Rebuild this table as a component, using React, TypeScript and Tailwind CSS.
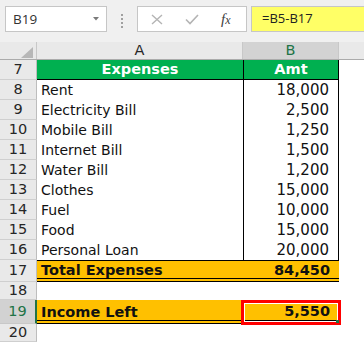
import React from 'react';

const font = "font-['DejaVu_Sans',sans-serif]";

type Item = { name: string; amt: string };

const items: Item[] = [
    { name: 'Rent', amt: '18,000' },
    { name: 'Electricity Bill', amt: '2,500' },
    { name: 'Mobile Bill', amt: '1,250' },
    { name: 'Internet Bill', amt: '1,500' },
    { name: 'Water Bill', amt: '1,200' },
    { name: 'Clothes', amt: '15,000' },
    { name: 'Fuel', amt: '10,000' },
    { name: 'Food', amt: '15,000' },
    { name: 'Personal Loan', amt: '20,000' },
];

// row header cell on the left
const RowNum = ({ n, h, active }: { n: number; h: string; active?: boolean }) => (
    <div
        className={
            active
                ? `${h} w-[37px] shrink-0 flex items-center justify-center bg-[#d2d2d2] border-b border-[#c8c8c8] border-r-2 border-r-[#217346] text-[#217346] text-[14.5px]`
                : `${h} w-[37px] shrink-0 flex items-center justify-center bg-[#e9e9e9] border-b border-[#cfcfcf] border-r border-r-[#bdbdbd] text-[#262626] text-[14.5px]`
        }
    >
        {n}
    </div>
);

const Toolbar = () => (
    <div className="h-[42px] bg-[#f0f0f0] flex items-start pt-[6px] pl-[5px] font-['Open_Sans',sans-serif]">
        <div className="w-[102px] h-[26px] bg-white border border-[#c6c6c6] flex items-center justify-between pl-[7px] pr-[7px]">
            <span className="text-[13.5px] text-[#333]">B19</span>
            <svg width="6" height="4" viewBox="0 0 6 4">
                <path d="M0 0 L6 0 L3 3.5 Z" fill="#7a7a7a" />
            </svg>
        </div>
        <div className="ml-[14px] mt-[8px] flex flex-col gap-[2px]">
            <div className="w-[2px] h-[2px] bg-[#a0a0a0]" />
            <div className="w-[2px] h-[2px] bg-[#a0a0a0]" />
            <div className="w-[2px] h-[2px] bg-[#a0a0a0]" />
            <div className="w-[2px] h-[2px] bg-[#a0a0a0]" />
        </div>
        <div className="ml-[14px] w-[110px] h-[26px] bg-white border border-[#c6c6c6] flex items-center pl-[13px]">
            <svg width="12" height="11" viewBox="0 0 12 11">
                <path d="M1 1 L11 10 M11 1 L1 10" stroke="#b4b4b4" strokeWidth="1.4" />
            </svg>
            <svg className="ml-[22px]" width="14" height="11" viewBox="0 0 14 11">
                <path d="M1 5.5 L5 9.5 L13 1" stroke="#b4b4b4" strokeWidth="1.6" fill="none" />
            </svg>
            <span className="ml-[22px] italic text-[15px] text-[#404040] font-['Liberation_Serif',serif] leading-none">
                f<span className="text-[12px]">x</span>
            </span>
        </div>
        <div className="ml-[4px] flex-1 h-[26px] bg-[#ffff66] border border-[#c6c6c6] border-r-0 flex items-center pl-[10px]">
            <span className="text-[13px] text-[#222]">=B5-B17</span>
        </div>
    </div>
);

const ColHeaders = () => (
    <div className={`flex h-[18px] bg-[#e9e9e9] border-b border-[#ababab] text-[14.5px] ${font}`}>
        <div className="w-[37px] shrink-0 border-r border-[#c8c8c8] flex items-end justify-end pr-[3px] pb-[1px]">
            <svg width="12" height="11" viewBox="0 0 12 11">
                <path d="M0 11 L12 11 L12 0 Z" fill="#b7b7b7" />
            </svg>
        </div>
        <div className="w-[206px] shrink-0 border-r border-[#c8c8c8] flex items-center justify-center text-[#262626]">A</div>
        <div className="w-[96px] shrink-0 bg-[#d3d3d3] border-r border-[#c8c8c8] flex items-center justify-center text-[#217346]">B</div>
        <div className="flex-1" />
    </div>
);

export default function App() {
    return (
        <div className={`w-[364px] h-[342px] overflow-hidden bg-white`}>
            <Toolbar />
            <ColHeaders />
            <div className={`${font} text-[14px] text-[#111]`}>
                {/* row 7 - green header */}
                <div className="flex">
                    <RowNum n={7} h="h-[20px]" />
                    <div className="w-[206px] h-[20px] bg-[#00b050] border-b border-black flex items-center justify-center text-white font-bold text-[14.5px]">
                        Expenses
                    </div>
                    <div className="w-[96px] h-[20px] bg-[#00b050] border-b border-l border-r border-black flex items-center justify-center text-white font-bold text-[14.5px]">
                        Amt
                    </div>
                </div>
                {items.map((it, i) => (
                    <div key={it.name} className="flex">
                        <RowNum n={i + 8} h="h-[20px]" />
                        <div className="w-[206px] h-[20px] flex items-center pl-[4px]">{it.name}</div>
                        <div className="w-[96px] h-[20px] border-l border-r border-black flex items-center justify-end pr-[9px] text-[15px]">
                            {it.amt}
                        </div>
                    </div>
                ))}
                {/* row 17 - total */}
                <div className="flex">
                    <RowNum n={17} h="h-[22px]" />
                    <div className="w-[302px] h-[22px] bg-[#ffc000] border-t border-b-4 border-double border-black flex items-end justify-between pl-[4px] pr-[9px] pb-[1px] font-bold text-[14.5px] leading-[14px]">
                        <span>Total Expenses</span>
                        <span>84,450</span>
                    </div>
                </div>
                <div className="flex">
                    <RowNum n={18} h="h-[18px]" />
                </div>
                {/* row 19 - income left */}
                <div className="flex">
                    <RowNum n={19} h="h-[24px]" active />
                    <div className="w-[206px] h-[24px] bg-[#ffc000] border-b-4 border-double border-black flex items-end pb-[1px] pl-[4px] font-bold text-[14.5px] leading-[14px]">
                        Income Left
                    </div>
                    <div className="relative w-[96px] h-[24px] bg-[#ffc000] border-b-4 border-double border-black flex items-end justify-end pb-[2px] pr-[9px] font-bold text-[14.5px] leading-[14px]">
                        <span>5,550</span>
                        <div className="absolute left-[-2px] right-[-2px] top-0 bottom-[-5px] border-[3px] border-[#ff0000]">
                            <div className="w-full h-full border border-white" />
                            <div className="absolute right-[-1px] bottom-[-1px] w-[3px] h-[3px] bg-[#217346]" />
                        </div>
                    </div>
                </div>
                <div className="flex">
                    <RowNum n={20} h="h-[18px]" />
                </div>
            </div>
        </div>
    );
}
